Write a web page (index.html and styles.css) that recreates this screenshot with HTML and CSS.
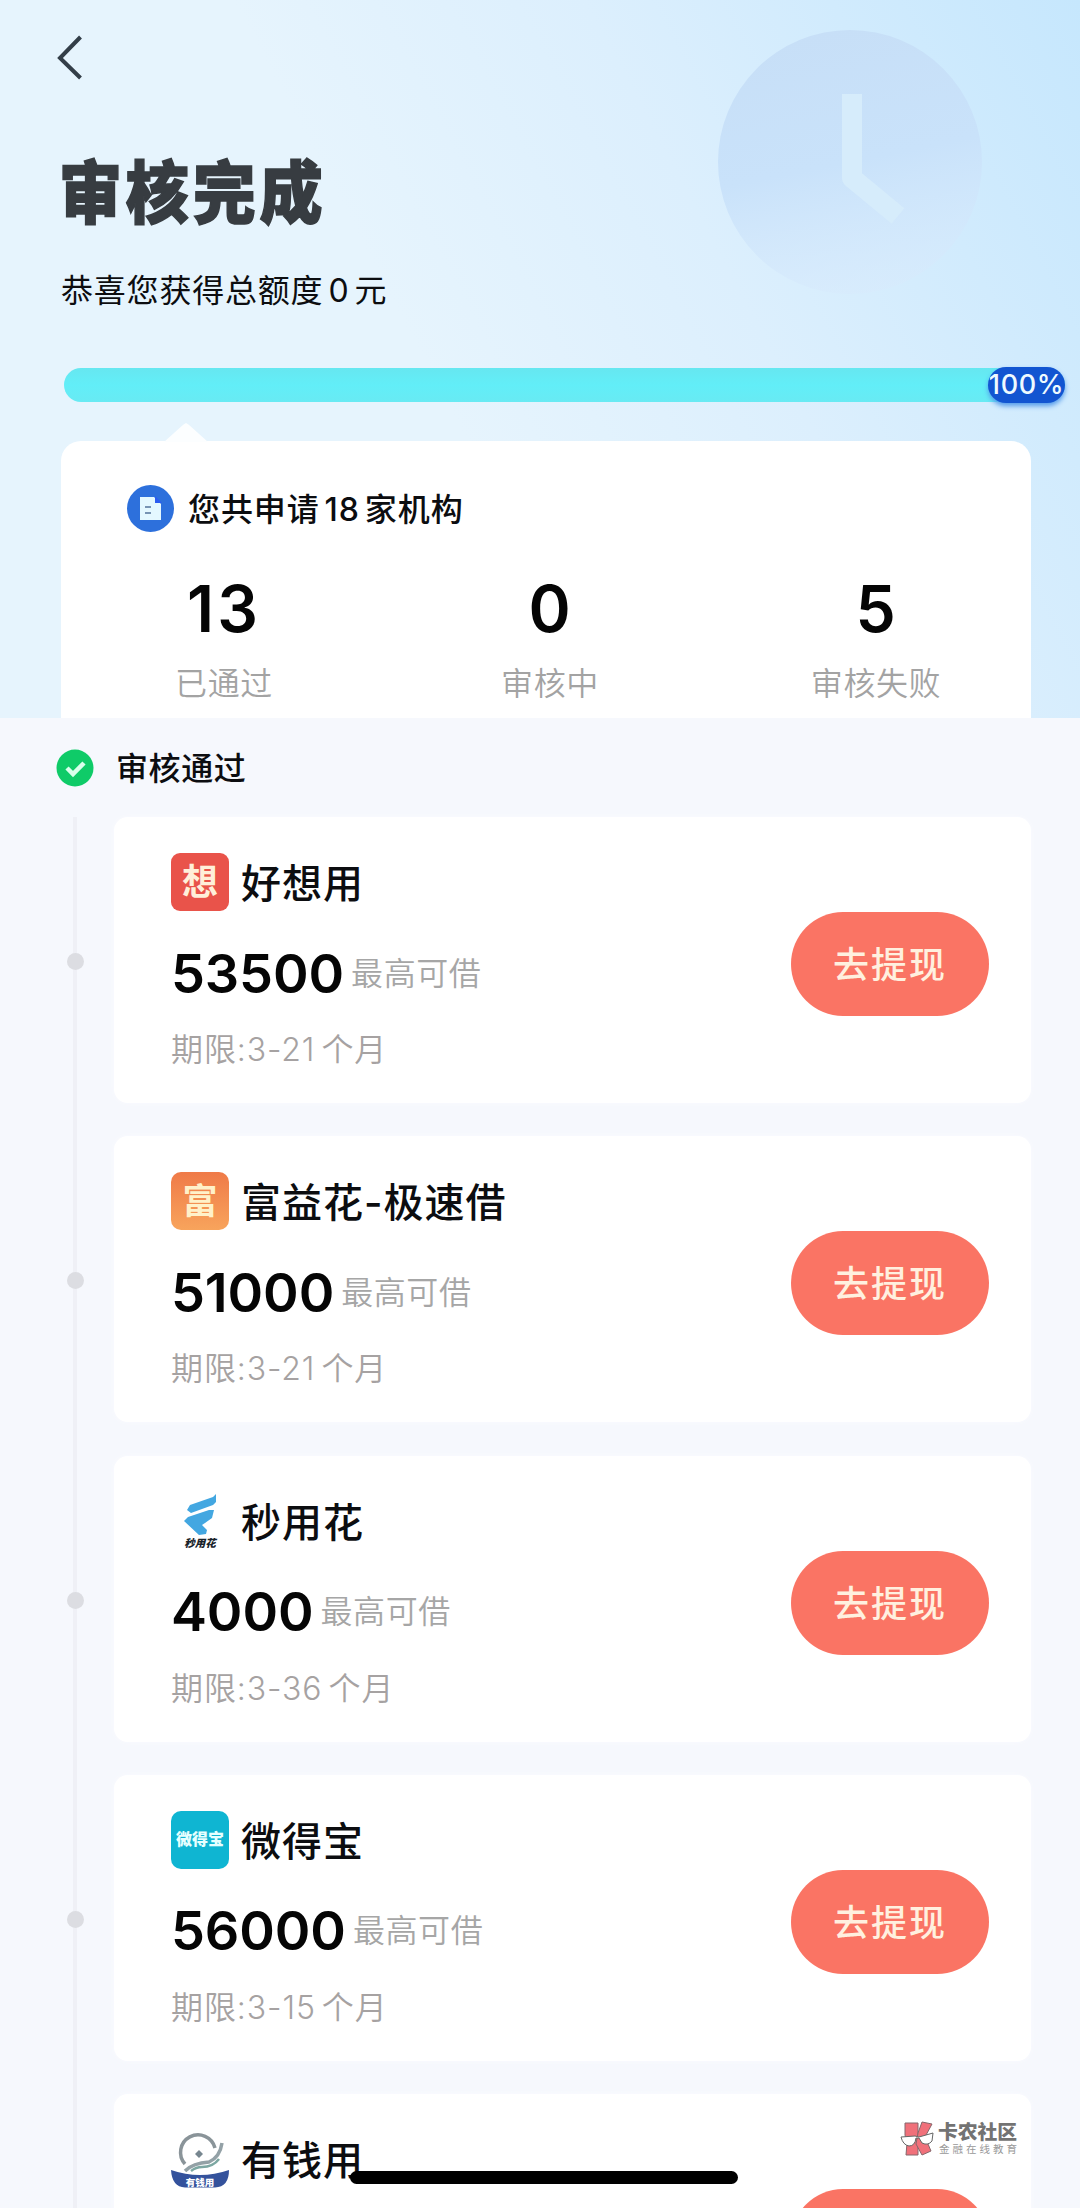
FILE: index.html
```html
<!DOCTYPE html>
<html lang="zh-CN">
<head>
<meta charset="utf-8">
<title>审核完成</title>
<link rel="stylesheet" href="styles.css">
</head>
<body>
<div class="page">
  <header class="hero">
    <svg class="clock" viewBox="0 0 270 270" aria-hidden="true">
      <defs>
        <linearGradient id="face" x1="0.4" y1="0" x2="0.6" y2="1">
          <stop offset="0" stop-color="#c7dff7"/>
          <stop offset="0.5" stop-color="#c9e2fa"/>
          <stop offset="1" stop-color="#d8eafc" stop-opacity="0.5"/>
        </linearGradient>
      </defs>
      <circle cx="135" cy="135" r="132" fill="url(#face)"/>
      <path d="M137 67V151L183 189" fill="none" stroke="#d6ecfb" stroke-width="20" stroke-linejoin="round"/>
    </svg>
    <svg class="back" viewBox="0 0 30 48" aria-hidden="true"><path d="M25.500 5L5 26L25.500 46" fill="none" stroke="#333e48" stroke-width="4"/></svg>
    <h1 class="title">审核完成</h1>
    <p class="subtitle">恭喜您获得总额度<span class="num">0</span>元</p>
    <div class="progress"><span class="percent">100%</span></div>
    <section class="summary">
      <div class="summary-head">
        <svg class="doc" viewBox="0 0 47 47" aria-hidden="true">
          <circle cx="23.500" cy="23.500" r="23.500" fill="#2d70dc"/>
          <path d="M13 12H27L34 19V35H13Z" fill="#e4f8ff"/>
          <path d="M28 11L35 18H28Z" fill="#2b5cf0"/>
          <path d="M18 22H24M18 28H24" stroke="#53739b" stroke-width="1.500"/>
        </svg>
        <span class="summary-title">您共申请<span class="num">18</span>家机构</span>
      </div>
      <div class="stats">
        <div class="stat"><b class="wide">13</b><span>已通过</span></div>
        <div class="stat"><b>0</b><span>审核中</span></div>
        <div class="stat"><b>5</b><span>审核失败</span></div>
      </div>
    </section>
  </header>

  <main class="list">
    <div class="group">
      <svg class="check" viewBox="0 0 38 38" aria-hidden="true"><circle cx="19" cy="19" r="18.500" fill="#0fcb68"/><path d="M11 19L17 25L28 14" fill="none" stroke="#d9ffeb" stroke-width="4.500"/></svg>
      <span class="group-title">审核通过</span>
    </div>

    <div class="item">
      <div class="rail"><i></i></div>
      <article class="card">
        <div class="info">
          <div class="name"><svg class="logo" viewBox="0 0 58 58"><rect width="58" height="58" rx="9" fill="#e9534a"/><text x="29" y="42" class="glyph mid" font-size="36" fill="#ffefd9">想</text></svg><span>好想用</span></div>
          <div class="amount"><b>53500</b><span>最高可借</span></div>
          <div class="term">期限:3-21<span class="cn">个月</span></div>
        </div>
        <a class="go">去提现</a>
      </article>
    </div>

    <div class="item">
      <div class="rail"><i></i></div>
      <article class="card">
        <div class="info">
          <div class="name"><svg class="logo" viewBox="0 0 58 58"><defs><linearGradient id="fu" x1="0" y1="0" x2="0" y2="1"><stop offset="0" stop-color="#ef7a48"/><stop offset="1" stop-color="#f8a45c"/></linearGradient></defs><rect width="58" height="58" rx="10" fill="url(#fu)"/><text x="29" y="42" class="glyph mid" font-size="35" fill="#fff1c9">富</text></svg><span>富益花-极速借</span></div>
          <div class="amount"><b>51000</b><span>最高可借</span></div>
          <div class="term">期限:3-21<span class="cn">个月</span></div>
        </div>
        <a class="go">去提现</a>
      </article>
    </div>

    <div class="item">
      <div class="rail"><i></i></div>
      <article class="card">
        <div class="info">
          <div class="name"><svg class="logo" viewBox="0 0 58 58"><g fill="#43a7e1"><path d="M19 13L42 5L45 2V10L42 13L20 21L16 18Z"/><path d="M17 25L38 18L43 18L41 26L34 31L31 33L36 38L35 42L28 43L13 29Z"/></g><text x="29" y="55" class="glyph tilt" font-size="10.500" fill="#182229">秒用花</text></svg><span>秒用花</span></div>
          <div class="amount"><b>4000</b><span>最高可借</span></div>
          <div class="term">期限:3-36<span class="cn">个月</span></div>
        </div>
        <a class="go">去提现</a>
      </article>
    </div>

    <div class="item">
      <div class="rail"><i></i></div>
      <article class="card">
        <div class="info">
          <div class="name"><svg class="logo" viewBox="0 0 58 58"><rect width="58" height="58" rx="10" fill="#0fb5d2"/><text x="29" y="33.500" class="glyph" font-size="16" fill="#e6ffff">微得宝</text></svg><span>微得宝</span></div>
          <div class="amount"><b>56000</b><span>最高可借</span></div>
          <div class="term">期限:3-15<span class="cn">个月</span></div>
        </div>
        <a class="go">去提现</a>
      </article>
    </div>

    <div class="item">
      <div class="rail"><i></i></div>
      <article class="card">
        <div class="info">
          <div class="name"><svg class="logo" viewBox="0 0 58 58"><path d="M0 40Q29 50 58 40Q58 57 44 57.500H14Q1 57 0 40Z" fill="#34529c"/><g fill="none" stroke-width="3.500"><path d="M14 34A17.500 17.500 0 1 1 44 18" stroke="#8a9499"/><path d="M51 13Q49 27 38 32Q22 33 14 41" stroke="#93a1a6"/><path d="M48 29Q42 37 31 37Q25 37 20 41" stroke="#7ca7a2" stroke-width="2.500"/></g><path d="M28 20L32 24L28 28L24 24Z" fill="#77868f"/><text x="29" y="55.500" class="glyph" font-size="9.500" fill="#fff">有钱用</text></svg><span>有钱用</span></div>
        </div>
        <a class="go"></a>
      </article>
    </div>
  </main>

  <div class="watermark">
    <svg class="mark" viewBox="0 0 35 36" aria-hidden="true">
      <g fill="#f0707a" stroke="#85676c" stroke-width="1"><path d="M5 2H18V34H6L7 22L5 14Z"/><path d="M22 1L32 3L25 16L31 30L22 34L16 23L18 12Z"/></g>
      <path d="M1 16L15 15L19 16L33 12L32 20Q28 25 22 22L19 17L16 17Q15 25 9 25Q3 24 1 16Z" fill="#fff" stroke="#666" stroke-width="1"/>
    </svg>
    <div class="mark-text"><strong>卡农社区</strong><span>金融在线教育</span></div>
  </div>
  <div class="home-bar"></div>
</div>
</body>
</html>
```
FILE: styles.css
```css
* { box-sizing: border-box; }

body {
  margin: 0;
  font-family: Inter, "Noto Sans CJK SC", sans-serif;
  color: #0c0d10;
  letter-spacing: 0.6px;
}

.page {
  position: relative;
  width: 1080px;
  height: 2208px;
  overflow: hidden;
  background: #f6f8fd;
}

.hero {
  position: relative;
  display: flex;
  flex-direction: column;
  align-items: flex-start;
  height: 718px;
  padding: 32px 49px 0 55px;
  background: linear-gradient(62deg, #e6f4fd 42%, #dceffd 66%, #c6e7fd 100%);
}

.clock {
  position: absolute;
  left: 715px;
  top: 27px;
  width: 270px;
  height: 270px;
}

.back { width: 30px; height: 48px; }

.title {
  margin: 64px 0 0 4px;
  font-size: 66px;
  line-height: 98px;
  font-weight: 900;
  letter-spacing: 4px;
  color: #373c41;
  transform: scale(0.955, 1.04);
  transform-origin: left;
  -webkit-text-stroke: 1.5px #373c41;
}

.subtitle {
  margin: 25px 0 0 6px;
  font-size: 32px;
  line-height: 48px;
  letter-spacing: 0.8px;
}

.num { margin: 0 5px; }

.progress {
  display: flex;
  align-items: center;
  justify-content: flex-end;
  width: 1001px;
  height: 34px;
  margin: 53px 0 0 9px;
  border-radius: 17px;
  background: linear-gradient(#66e7f0, #62eef8 50%, #68eaf3);
}

.percent {
  display: flex;
  justify-content: center;
  width: 77px;
  height: 36px;
  border-radius: 18px;
  background: #1255d1;
  box-shadow: 0 3px 5px #549bea;
  color: #eefaff;
  font-size: 27px;
  font-weight: 500;
  line-height: 36px;
}

.summary {
  position: relative;
  width: 970px;
  height: 277px;
  margin: 39px 0 0 6px;
  padding-top: 40px;
  background: #fff;
  border-radius: 20px 20px 0 0;
}

.summary::before {
  content: "";
  position: absolute;
  left: 103px;
  top: -18px;
  width: 44px;
  height: 19px;
  background: #fcfeff;
  clip-path: polygon(0 100%, 43% 10%, 50% 0, 57% 10%, 100% 100%);
}

.summary-head {
  display: flex;
  align-items: center;
  gap: 14px;
  height: 55px;
  padding-left: 66px;
  font-size: 32px;
  font-weight: 500;
  letter-spacing: 0.9px;
}

.summary-title, .group-title { padding-bottom: 4px; }

.doc { width: 47px; height: 47px; }

.stats {
  display: grid;
  grid-template-columns: repeat(3, 326px);
  margin-top: 33px;
}

.stat { display: flex; flex-direction: column; align-items: center; }
.stat b { font-size: 64px; line-height: 80px; font-weight: 600; color: #050505; }
.stat .wide { letter-spacing: 3px; }
.stat span { margin-top: 11px; font-size: 32px; line-height: 48px; font-weight: 350; color: #a3a3a3; }

.group {
  display: flex;
  align-items: center;
  gap: 22px;
  height: 99px;
  padding: 1px 0 0 56px;
  font-size: 32px;
  font-weight: 500;
}

.check { width: 38px; height: 38px; }

.item { display: flex; height: 319.25px; }

.rail {
  width: 114px;
  padding: 136px 0 0 67px;
  background: linear-gradient(#eff0f6, #eff0f6) 73px 0 / 4px 100% no-repeat;
}

.rail i {
  display: block;
  width: 17px;
  height: 17px;
  border-radius: 50%;
  background: #dcdde2;
}

.card {
  display: flex;
  justify-content: space-between;
  align-items: flex-start;
  width: 917px;
  height: 286px;
  padding: 36px 42px 0 57px;
  border-radius: 14px;
  background: #fff;
  box-shadow: 0 0 4px #fafbfe;
}

.name {
  display: flex;
  align-items: center;
  gap: 12px;
  height: 58px;
  font-size: 40px;
  font-weight: 500;
  letter-spacing: 1px;
}

.name span { padding-bottom: 2px; }

.logo { width: 58px; height: 58px; letter-spacing: 0; }

.glyph {
  font-family: "Noto Sans CJK SC", sans-serif;
  font-weight: 900;
  text-anchor: middle;
}

.mid { font-weight: 700; }
.tilt { font-style: italic; }

.amount {
  display: flex;
  align-items: center;
  gap: 7px;
  height: 58px;
  margin-top: 33px;
}

.amount b { font-size: 54px; font-weight: 600; color: #050505; letter-spacing: -0.1px; }
.amount span { padding-bottom: 5px; font-size: 32px; font-weight: 350; color: #a6a6a6; }

.term {
  height: 40px;
  margin-top: 28px;
  font-size: 32px;
  line-height: 40px;
  font-weight: 350;
  color: #a6a2a2;
  letter-spacing: 0.9px;
}

.cn { margin-left: 6px; }

.go {
  width: 198px;
  height: 104px;
  margin-top: 59px;
  border-radius: 52px;
  background: #fa7464;
  color: #fff0df;
  font-size: 36px;
  font-weight: 500;
  line-height: 107px;
  text-align: center;
  letter-spacing: 2px;
}

.watermark {
  position: absolute;
  left: 900px;
  top: 2121px;
  display: flex;
  gap: 3px;
  letter-spacing: 0;
}

.mark { width: 35px; height: 36px; }
.mark-text { display: flex; flex-direction: column; }
.mark-text strong { font-size: 19.8px; line-height: 22px; font-weight: 900; color: #737373; }
.mark-text span { padding-left: 1px; font-size: 10.5px; line-height: 13px; letter-spacing: 3px; color: #999; }

.home-bar {
  position: absolute;
  left: 350px;
  top: 2171px;
  width: 388px;
  height: 13px;
  border-radius: 7px;
  background: #000;
}
```
